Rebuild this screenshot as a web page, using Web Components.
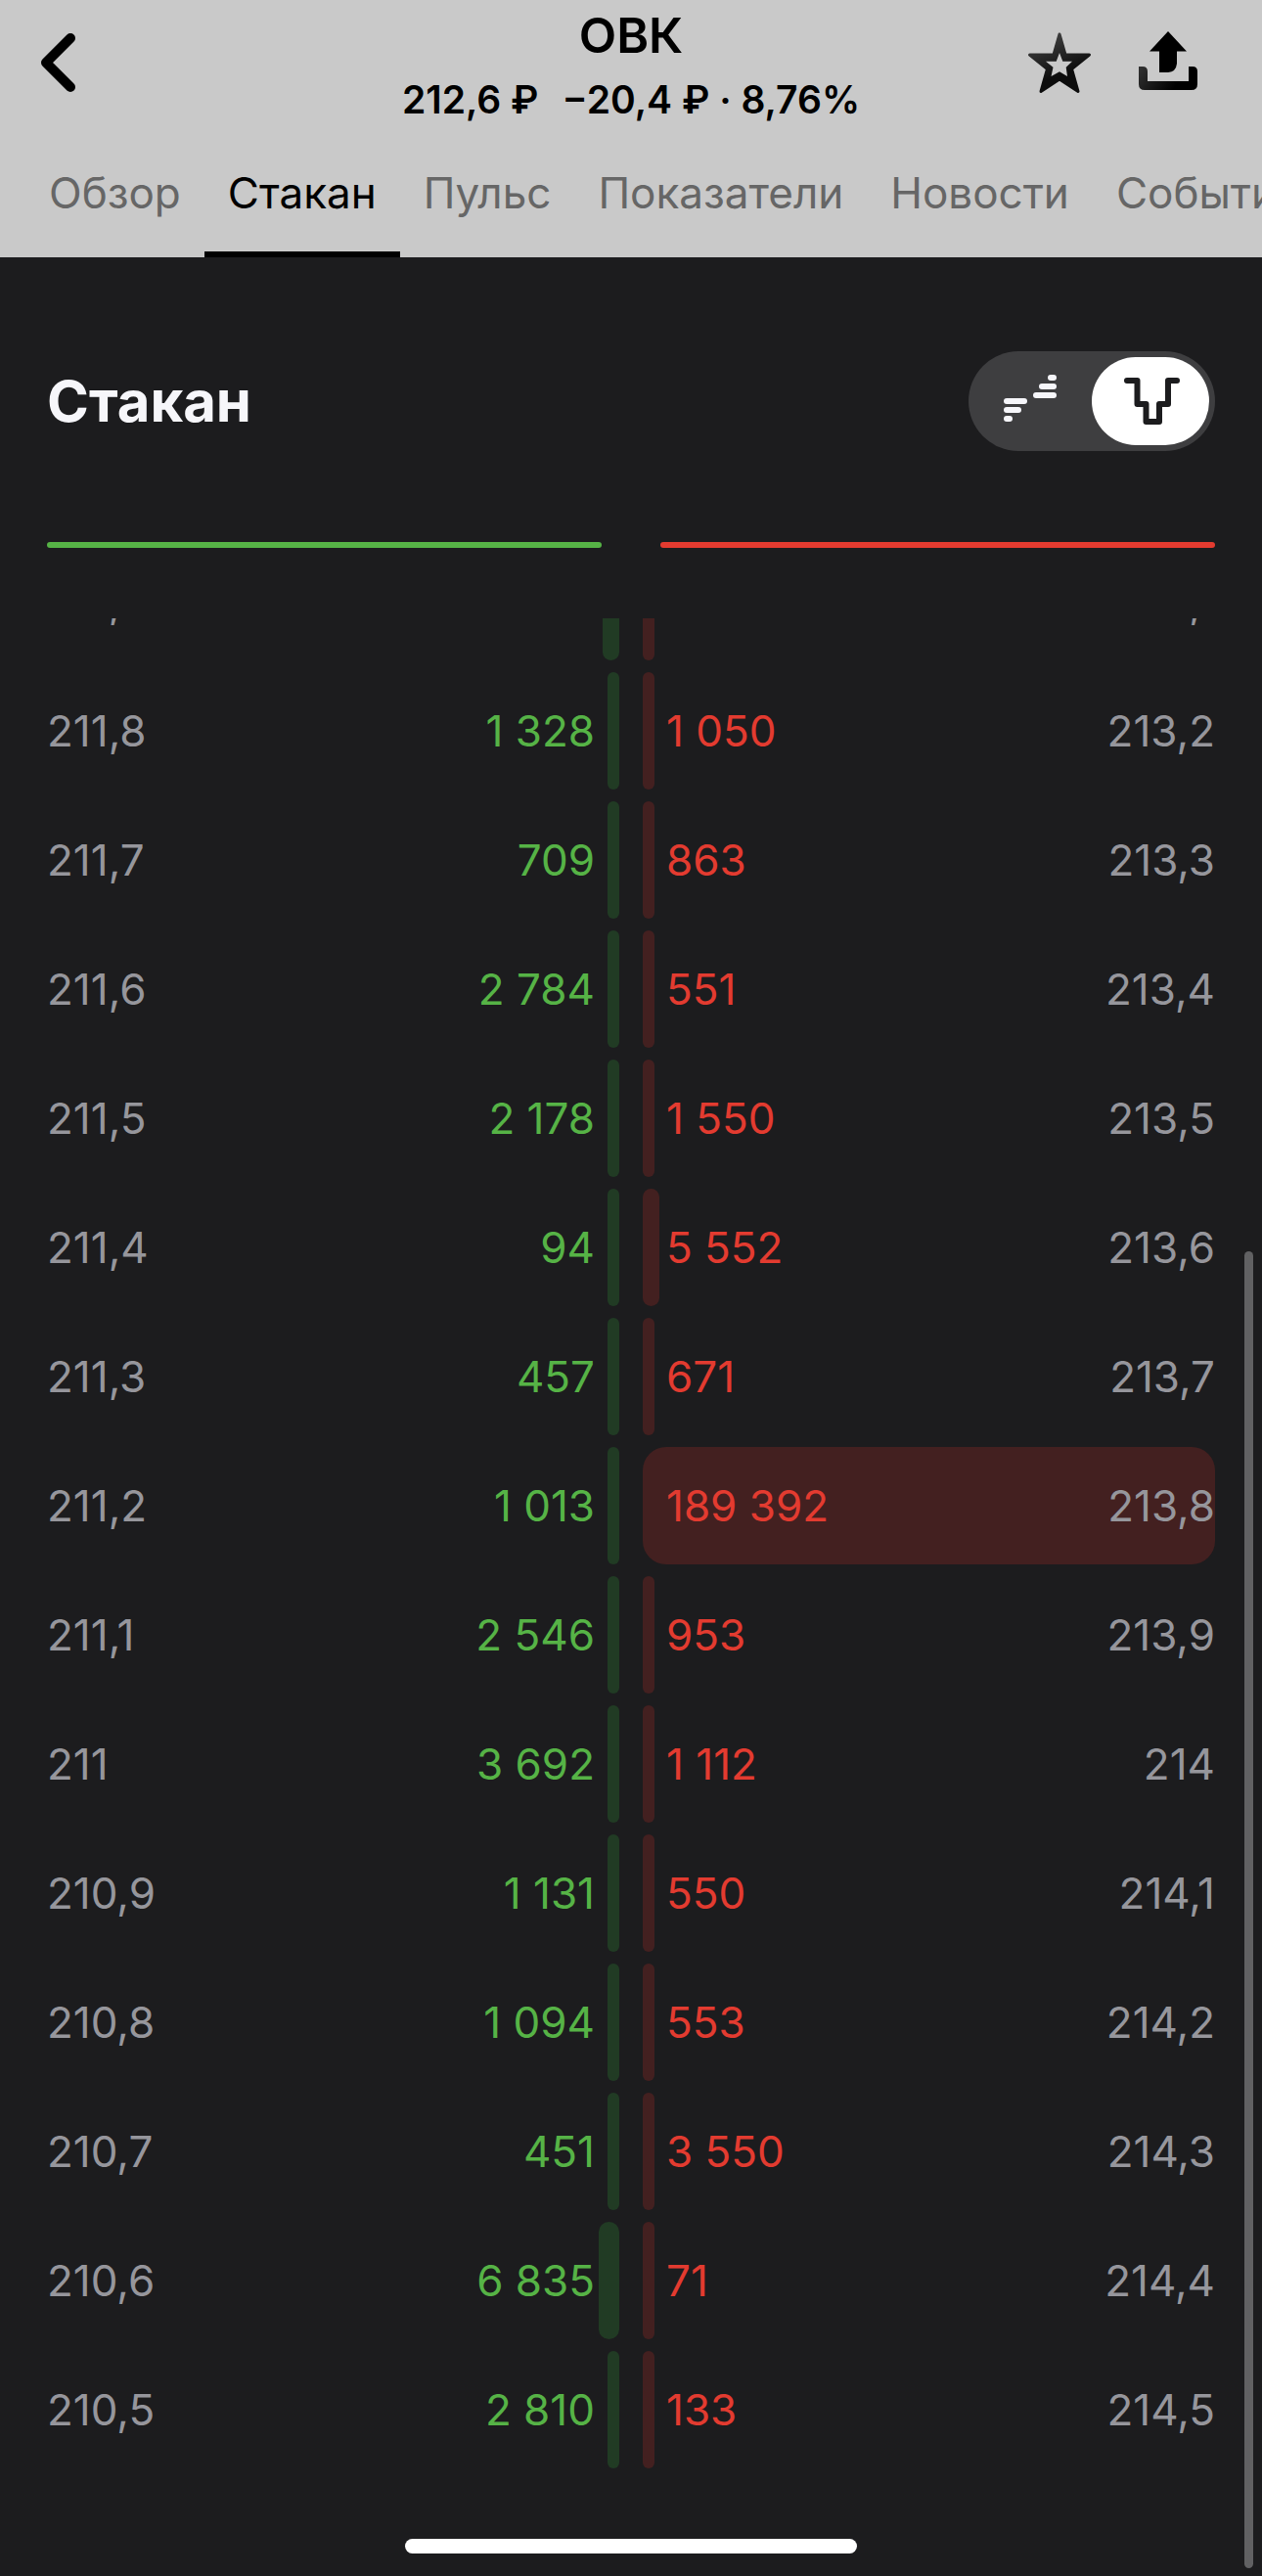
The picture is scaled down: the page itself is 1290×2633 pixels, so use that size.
<!DOCTYPE html>
<html lang="ru">
<head>
<meta charset="utf-8">
<meta name="viewport" content="width=device-width, initial-scale=1">
<title>ОВК</title>
<style>
html, body{ margin:0; }
body{
  background:#1c1c1e;
  font-family:Inter, "Liberation Sans", sans-serif;
}
</style>
</head>
<body>

<stock-screen>
  <stock-header slot="header" name="ОВК" price="212,6 ₽" change="−20,4 ₽ · 8,76%"></stock-header>
  <tab-strip slot="header">
    <tab-item>Обзор</tab-item>
    <tab-item active>Стакан</tab-item>
    <tab-item>Пульс</tab-item>
    <tab-item>Показатели</tab-item>
    <tab-item>Новости</tab-item>
    <tab-item>События</tab-item>
  </tab-strip>
  <section-title>Стакан<view-toggle slot="action"></view-toggle></section-title>
  <balance-line></balance-line>
  <order-book></order-book>
</stock-screen>

<script>
window.customElements.define('stock-screen', class extends HTMLElement {

    constructor(){ super(); this.attachShadow({mode:'open'}); }

    connectedCallback(){
      this.shadowRoot.innerHTML =
        `
    <style>
:host{
  position:relative;
  display:flex;
  flex-direction:column;
  min-height:100vh;
  overflow:hidden;
  background:#1c1c1e;
}
header{ background:#c9c9c9; }
main{
  display:flex;
  flex-direction:column;
  padding:0 48px;
}
footer{
  display:flex;
  justify-content:center;
  margin-top:auto;
  padding:24px 0 23px;
}
.home{
  width:462px;
  height:15px;
  border-radius:8px;
  background:#fff;
}
/* scroll thumb floats over the page */
.thumb{
  position:absolute;
  right:9px;
  bottom:8px;
  width:9px;
  height:1346px;
  border-radius:5px;
  background:#616163;
}
    </style>
    <header><slot name="header"></slot></header>
    <main><slot></slot></main>
    <footer><div class="home"></div></footer>
    <div class="thumb"></div>
    `;
    }
  })

window.customElements.define('stock-header', class extends HTMLElement {

    static get observedAttributes(){ return ['name','price','change']; }

    constructor(){ super(); this.attachShadow({mode:'open'}); }

    attributeChangedCallback(attr, oldVal, newVal){ this[attr]=newVal }

    connectedCallback(){
      this.shadowRoot.innerHTML =
        `
    <style>
:host{
  display:grid;
  grid-template-columns:1fr auto 1fr;
  padding:6px 66px 0 40px;
  color:#000;
}
*{ box-sizing:border-box; }
button{
  display:flex;
  padding:0;
  border:none;
  background:none;
  color:inherit;
}
svg{ display:block; }
.back, .actions{
  align-self:start;
  margin-top:26px;
}
.back{ justify-self:start; }
.actions{
  display:flex;
  gap:48px;
  justify-self:end;
}
.info{
  display:grid;
  gap:12px;
  justify-items:center;
  /* side paddings differ, this keeps the name in the middle */
  margin-left:26px;
}
h1{
  margin:0;
  font-size:50px;
  line-height:60px;
  font-weight:600;
}
p{
  display:flex;
  gap:24px;
  margin:0;
  font-size:39px;
  line-height:48px;
  font-weight:600;
  white-space:nowrap;
}
    </style>
    <button class="back" aria-label="Назад">
      <svg width="40" height="64" viewBox="0 0 40 64" fill="none" stroke="currentColor" stroke-width="10" stroke-linecap="round" stroke-linejoin="round"><path d="M32 7 7 32 32 57"/></svg>
    </button>
    <div class="info">
      <h1>${this.name}</h1>
      <p><span>${this.price}</span><span>${this.change}</span></p>
    </div>
    <div class="actions">
      <button aria-label="В избранное">
        <svg width="66" height="66" viewBox="0 0 66 66">
          <defs><linearGradient id="s" x1="0" y1="0" x2=".4" y2="1"><stop offset="0" stop-color="#484848"/><stop offset=".8" stop-color="#0c0c0c"/></linearGradient></defs>
          <path fill="url(#s)" stroke="url(#s)" stroke-width="3" stroke-linejoin="round" d="M33 3 27 24H2.500L20.500 38.500 14 61.500 33 49 52 61.500 45.500 38.500 63.500 24H39Z"/>
          <path fill="#c9c9c9" d="M33 22 36.300 30.700H46L39.700 36.700 41 46 33 41.300 24.500 46 26.500 36.700 19 30.700H29.700Z"/>
        </svg>
      </button>
      <button aria-label="Поделиться">
        <svg width="60" height="60" viewBox="0 0 60 60">
          <defs><linearGradient id="t" x1="0" y1="0" x2="1" y2=".3"><stop offset="0" stop-color="#333"/><stop offset=".8" stop-color="#000"/></linearGradient></defs>
          <path d="M30 0 49 20.500H39V33Q38 41.500 30 42H21V20.500H11Z"/>
          <path fill="url(#t)" d="M0 36H4Q9 36 9 41V51H51V36H55Q60 36 60 41V54Q60 60 54 60H6Q0 60 0 54Z"/>
        </svg>
      </button>
    </div>
    `;
    }
  })

window.customElements.define('tab-strip', class extends HTMLElement {

    constructor(){ super(); this.attachShadow({mode:'open'}); }

    connectedCallback(){
      this.shadowRoot.innerHTML =
        `
    <style>
:host{ display:block; overflow:hidden; }
nav{
  display:flex;
  padding:0 26px;
}
    </style>
    <nav><slot></slot></nav>
    `;
    }
  })

window.customElements.define('tab-item', class extends HTMLElement {

    constructor(){ super(); this.attachShadow({mode:'open'}); }

    connectedCallback(){
      this.shadowRoot.innerHTML =
        `
    <style>
:host{ display:block; flex:none; }
a{
  display:block;
  padding:44px 24px 33px;
  border-bottom:6px solid transparent;
  color:#666;
  font-size:44px;
  line-height:54px;
  text-decoration:none;
  white-space:nowrap;
}
:host([active]) a{
  color:#000;
  border-color:#000;
}
    </style>
    <a href="#"><slot></slot></a>
    `;
    }
  })

window.customElements.define('section-title', class extends HTMLElement {

    constructor(){ super(); this.attachShadow({mode:'open'}); }

    connectedCallback(){
      this.shadowRoot.innerHTML =
        `
    <style>
:host{
  display:flex;
  align-items:center;
  justify-content:space-between;
  padding:96px 0 93px;
}
h2{
  margin:0;
  color:#f6f6fa;
  font-size:58px;
  line-height:72px;
  font-weight:700;
}
    </style>
    <h2><slot></slot></h2>
    <slot name="action"></slot>
    `;
    }
  })

window.customElements.define('view-toggle', class extends HTMLElement {

    constructor(){ super(); this.attachShadow({mode:'open'}); }

    connectedCallback(){
      this.shadowRoot.innerHTML =
        `
    <style>
:host{
  display:flex;
  padding:6px;
  border-radius:51px;
  background:#3e3e40;
}
label{
  display:flex;
  align-items:center;
  justify-content:center;
  width:120px;
  height:90px;
  border-radius:45px;
  color:#f6f6fa;
}
input{
  appearance:none;
  width:0;
  height:0;
  margin:0;
}
label:has(input:checked){
  background:#fff;
  color:#1c1c1e;
}
    </style>
    <label>
      <input type="radio" name="view" aria-label="Лесенка">
      <svg width="60" height="60" viewBox="0 0 60 60" fill="currentColor">
        <rect x="45" y="3" width="9" height="6" rx="3"/>
        <rect x="36" y="12" width="18" height="6" rx="3"/>
        <rect x="30" y="21" width="24" height="6" rx="3"/>
        <rect x="0" y="27" width="24" height="6" rx="3"/>
        <rect x="0" y="36" width="18" height="6" rx="3"/>
        <rect x="0" y="45" width="9" height="6" rx="3"/>
      </svg>
    </label>
    <label>
      <input type="radio" name="view" aria-label="Стакан" checked>
      <svg width="60" height="60" viewBox="0 0 60 60" fill="none" stroke="currentColor" stroke-width="6" stroke-linecap="round" stroke-linejoin="round"><path d="M6 9H16.500V33H25.500V51H39V33H48V9H57"/></svg>
    </label>
    `;
    }
  })

window.customElements.define('balance-line', class extends HTMLElement {

    constructor(){ super(); this.attachShadow({mode:'open'}); }

    connectedCallback(){
      this.shadowRoot.innerHTML =
        `
    <style>
:host{
  display:flex;
  gap:60px;
  padding-bottom:72px;
}
div{
  flex:1;
  height:6px;
  border-radius:3px;
}
.bid{ background:#56b346; }
.ask{ background:#e33b30; }
    </style>
    <div class="bid"></div>
    <div class="ask"></div>
    `;
    }
  })

// bid price, bid lots, ask lots, ask price
const LEVELS = [
  ['211,9', '', '', '213,1'],
  ['211,8', '1 328', '1 050', '213,2'],
  ['211,7', '709', '863', '213,3'],
  ['211,6', '2 784', '551', '213,4'],
  ['211,5', '2 178', '1 550', '213,5'],
  ['211,4', '94', '5 552', '213,6'],
  ['211,3', '457', '671', '213,7'],
  ['211,2', '1 013', '189 392', '213,8'],
  ['211,1', '2 546', '953', '213,9'],
  ['211', '3 692', '1 112', '214'],
  ['210,9', '1 131', '550', '214,1'],
  ['210,8', '1 094', '553', '214,2'],
  ['210,7', '451', '3 550', '214,3'],
  ['210,6', '6 835', '71', '214,4'],
  ['210,5', '2 810', '133', '214,5'],
];

window.customElements.define('order-book', class extends HTMLElement {

    constructor(){ super(); this.attachShadow({mode:'open'}); }

    lots(text){ return Number(text.replace(/\s/g,'')) }

    // a lots cell is half of its side, so the largest level takes 200% of it
    bar(text, fallback){
      const max = Math.max(...LEVELS.flatMap(l => [this.lots(l[1]), this.lots(l[2])]));
      const share = (this.lots(text) || fallback) / max * 200;
      return `<i style="width:${share.toFixed(2)}%"></i>`;
    }

    connectedCallback(){
      const rows = LEVELS.map(([bidPrice, bid, ask, askPrice]) => `
      <tr>
        <td class="price">${bidPrice}</td>
        <td class="bid">${this.bar(bid, 5500)}<span>${bid}</span></td>
        <td class="ask">${this.bar(ask, 100)}<span>${ask}</span></td>
        <td class="price last">${askPrice}</td>
      </tr>`).join('');

      this.shadowRoot.innerHTML =
        `
    <style>
:host{
  display:block;
  overflow:hidden;
}
table, tbody{ display:block; }
/* list is scrolled, the first level is cut by the top edge */
table{ margin-top:-77px; }
tr{
  display:grid;
  grid-template-columns:1fr 1fr 24px 1fr 1fr;
  margin-bottom:12px;
}
td{
  position:relative;
  display:block;
  height:120px;
  padding:0;
  font-size:44px;
  line-height:120px;
  white-space:nowrap;
}
.price{
  z-index:1;
  color:#96969c;
}
.last{ text-align:right; }
.bid{
  padding-right:25px;
  color:#56b346;
  text-align:right;
}
.ask{
  grid-column:4;
  padding-left:24px;
  color:#e33b30;
}
span{ position:relative; }
i{
  position:absolute;
  top:0;
  bottom:0;
  min-width:12px;
  border-radius:24px;
}
.bid i{ right:0; background:#213b24; }
.ask i{ left:0; background:#432020; }
    </style>
    <table aria-label="Стакан заявок"><tbody>${rows}</tbody></table>
    `;
    }
  })
</script>
</body>
</html>
